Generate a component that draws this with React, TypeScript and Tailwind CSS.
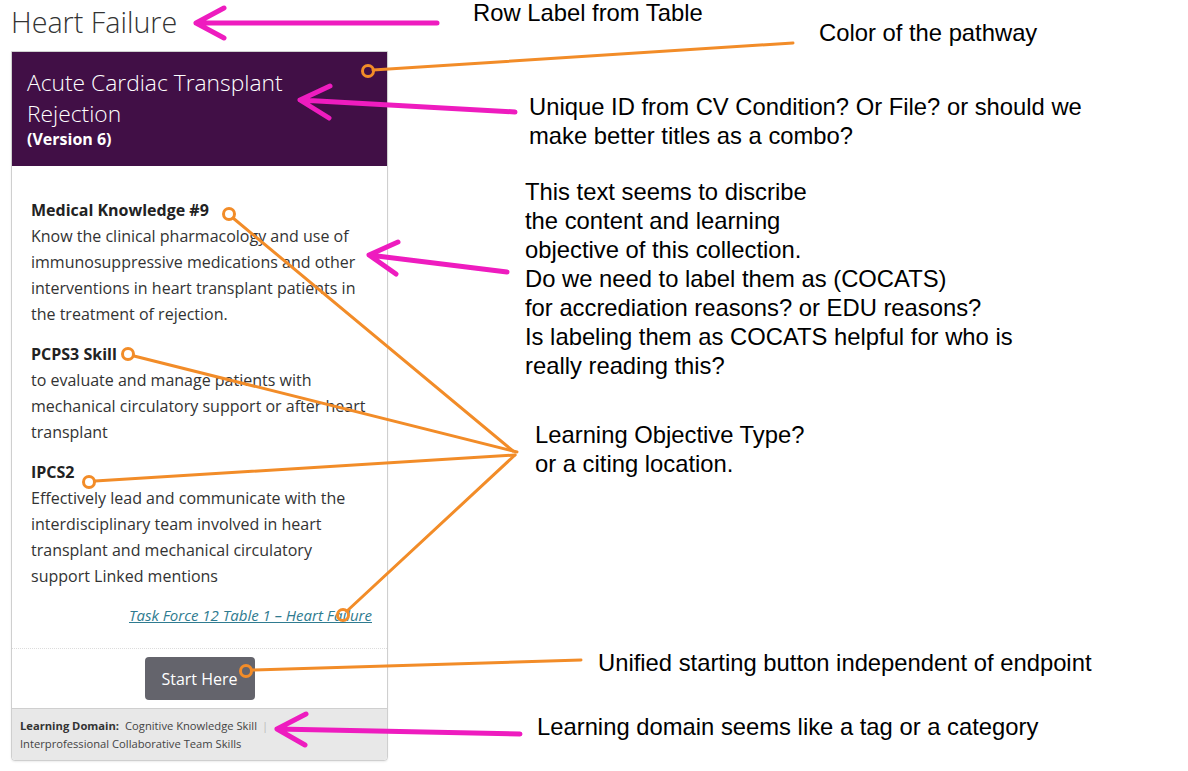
// Annotated review screenshot: pathway card with callout notes.

const ANNO = "font-['Liberation_Sans',Arial,sans-serif] text-[23.8px] leading-[29px] text-black";

const objectives = [
  {
    title: 'Medical Knowledge #9',
    text: 'Know the clinical pharmacology and use of immunosuppressive medications and other interventions in heart transplant patients in the treatment of rejection.',
  },
  {
    title: 'PCPS3 Skill',
    text: 'to evaluate and manage patients with mechanical circulatory support or after heart transplant',
  },
  {
    title: 'IPCS2',
    text: 'Effectively lead and communicate with the interdisciplinary team involved in heart transplant and mechanical circulatory support Linked mentions',
  },
];

function PathwayCard() {
  return (
    <div className="mt-[11px] w-[377px] rounded-b-[4px] border border-[#cfcfcf] bg-white font-['Open_Sans',sans-serif] shadow-[0_1px_2px_rgba(0,0,0,0.08)]">
      <div className="bg-[#410f46] pl-[15px] pr-4 pt-[15px] pb-[17px] text-white">
        <h2 className="text-[22.8px] font-light leading-[31px]">Acute Cardiac Transplant Rejection</h2>
        <p className="text-[16px] font-bold leading-[20px]">(Version 6)</p>
      </div>

      <div className="pl-[19px] pr-[15px] pt-[31px] pb-[22px] text-[16px] leading-[26px] text-[#333]">
        {objectives.map((o, i) => (
          <div key={o.title} className={i > 0 ? 'mt-[14px]' : ''}>
            <h4 className="font-bold text-[#222]">{o.title}</h4>
            <p>{o.text}</p>
          </div>
        ))}
        <p className="mt-[15px] text-right text-[15px] leading-[22px] italic">
          <a className="text-[#2f7b90] underline">Task Force 12 Table 1 – Heart Failure</a>
        </p>
      </div>

      <div className="flex justify-center border-t border-dotted border-[#dcdcdc] py-[8px]">
        <button className="h-[43px] w-[110px] rounded-[4px] bg-[#64646c] text-[16px] text-white">
          Start Here
        </button>
      </div>

      <div className="rounded-b-[4px] border-t border-[#cfcfcf] bg-[#e8e8e8] px-2 pt-[8px] pb-[7px] text-[11.2px] leading-[18px] text-[#444]">
        <span className="font-bold text-[#333]">Learning Domain:</span>
        <span className="ml-[6px]">Cognitive Knowledge Skill</span>
        <span className="mx-[5px] text-[#bbb]">|</span>
        <br />
        <span>Interprofessional Collaborative Team Skills</span>
      </div>
    </div>
  );
}

function Callouts() {
  const pink = '#ee1cbf';
  const orange = '#f28c28';
  return (
    <svg className="pointer-events-none absolute inset-0" width="1188" height="771" viewBox="0 0 1188 771">
      <g stroke={pink} strokeWidth="5" fill="none" strokeLinecap="round" strokeLinejoin="round">
        <path d="M437 23 L196 23 M224 8 L196 23 L224 38" />
        <path d="M515 112 L300 100 M330 86 L300 100 L329 118" />
        <path d="M507 272 L369 255 M398 242 L369 255 L396 274" />
        <path d="M520 734 L277 729 M306 714 L277 729 L305 745" />
      </g>
      <g stroke={orange} strokeWidth="3" fill="none" strokeLinecap="round">
        <path d="M373 70 L793 43" />
        <path d="M233 218 L513 451" />
        <path d="M134 356 L517 452" />
        <path d="M95 481 L515 455" />
        <path d="M347 611 L515 455" />
        <path d="M252 670 L581 660" />
        <circle cx="368" cy="71" r="5.5" />
        <circle cx="229" cy="214" r="5.5" />
        <circle cx="128" cy="354" r="5.5" />
        <circle cx="89" cy="482" r="5.5" />
        <circle cx="343" cy="615" r="5.5" />
        <circle cx="246" cy="671" r="5.5" />
      </g>
    </svg>
  );
}

export default function App() {
  return (
    <div className="relative h-[771px] w-[1188px] overflow-hidden bg-white">
      <div className="pt-[4px] pl-[11px]">
        <h1 className="font-['Open_Sans',sans-serif] text-[28.7px] font-light leading-[36px] text-[#333]">
          Heart Failure
        </h1>
        <PathwayCard />
      </div>

      <p className={`absolute top-[-2px] left-[473px] ${ANNO}`}>Row Label from Table</p>
      <p className={`absolute top-[18px] left-[819px] ${ANNO}`}>Color of the pathway</p>
      <p className={`absolute top-[92px] left-[529px] ${ANNO}`}>
        Unique ID from CV Condition? Or File? or should we
        <br />
        make better titles as a combo?
      </p>
      <p className={`absolute top-[177px] left-[525px] ${ANNO}`}>
        This text seems to discribe
        <br />
        the content and learning
        <br />
        objective of this collection.
        <br />
        Do we need to label them as (COCATS)
        <br />
        for accrediation reasons? or EDU reasons?
        <br />
        Is labeling them as COCATS helpful for who is
        <br />
        really reading this?
      </p>
      <p className={`absolute top-[420px] left-[535px] ${ANNO}`}>
        Learning Objective Type?
        <br />
        or a citing location.
      </p>
      <p className={`absolute top-[648px] left-[598px] ${ANNO}`}>Unified starting button independent of endpoint</p>
      <p className={`absolute top-[712px] left-[537px] ${ANNO}`}>Learning domain seems like a tag or a category</p>

      <Callouts />
    </div>
  );
}
